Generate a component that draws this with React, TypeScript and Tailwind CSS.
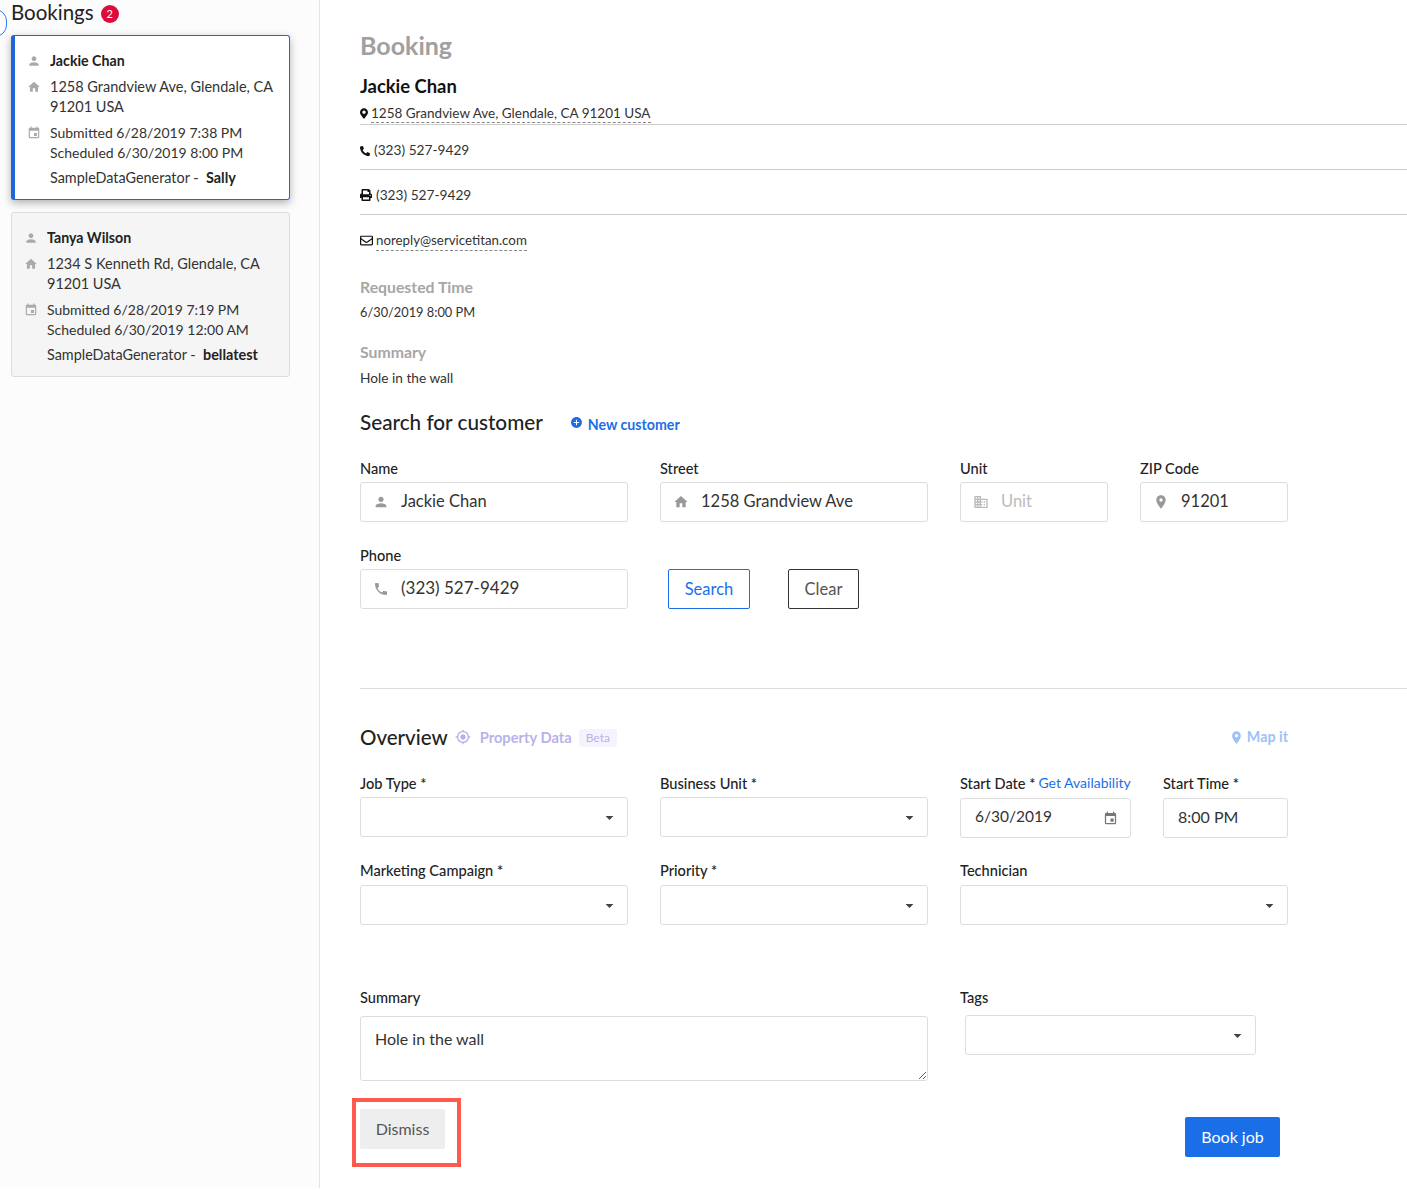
import React from "react";
import {
  MdPerson,
  MdHome,
  MdEvent,
  MdPhone,
  MdDomain,
  MdPlace,
  MdAddCircle,
  MdGpsFixed,
  MdArrowDropDown,
} from "react-icons/md";
import { FaMapMarkerAlt, FaPhoneAlt, FaPrint, FaRegEnvelope } from "react-icons/fa";

type BookingCardProps = {
  name: string;
  address: string;
  submitted: string;
  scheduled: string;
  agent: string;
  active?: boolean;
};

function BookingCard({ name, address, submitted, scheduled, agent, active }: BookingCardProps) {
  return (
    <div
      className={
        active
          ? "h-[165px] rounded-[3px] border border-[#1f66d8] border-l-[4px] bg-white pl-[12px] pr-2 pt-[15px] shadow-[0_3px_8px_rgba(0,0,0,0.3)]"
          : "h-[165px] rounded-[3px] border border-[#dcdcdc] bg-[#f5f5f5] pl-[12px] pr-2 pt-[15px]"
      }
    >
      <div className="flex h-5 items-center">
        <MdPerson className="w-[14px] h-[14px] text-[#aaaaaa]" />
        <span className="ml-[9px] text-[14.2px] font-bold text-[#222222]">{name}</span>
      </div>
      <div className="mt-[6px] flex">
        <MdHome className="mt-[3px] w-[14px] h-[14px] shrink-0 text-[#aaaaaa]" />
        <span className="ml-[9px] text-[14.5px] leading-5 text-[#333333]">{address}</span>
      </div>
      <div className="mt-[6px] flex">
        <MdEvent className="mt-[3px] w-[14px] h-[14px] shrink-0 text-[#aaaaaa]" />
        <span className="ml-[9px] text-[14px] leading-5 text-[#333333]">
          Submitted {submitted}
          <br />
          Scheduled {scheduled}
        </span>
      </div>
      <div className="mt-[5px] ml-[23px] text-[14.4px] leading-5 text-[#333333]">
        SampleDataGenerator -&nbsp; <b className="font-bold text-[#222222]">{agent}</b>
      </div>
    </div>
  );
}

function Field({
  label,
  extra,
  className,
  children,
}: {
  label: string;
  extra?: React.ReactNode;
  className: string;
  children: React.ReactNode;
}) {
  return (
    <div className={className}>
      <div className="flex h-4 items-center whitespace-nowrap pt-[2px] text-[14.6px] font-medium text-[#222222]">
        {label}
        {extra}
      </div>
      <div className="mt-[6px]">{children}</div>
    </div>
  );
}

function IconInput({
  icon,
  value,
  placeholder,
  textClass = "text-[16.5px]",
}: {
  icon: React.ReactNode;
  value?: string;
  placeholder?: string;
  textClass?: string;
}) {
  return (
    <div className="flex h-10 items-center rounded-[3px] border border-[#dddddd] bg-white pl-[12px]">
      <span className="flex w-[28px] shrink-0 text-[#999999]">{icon}</span>
      <input
        readOnly
        defaultValue={value}
        placeholder={placeholder}
        className={`w-full min-w-0 bg-transparent pb-[2px] ${textClass} text-[#333333] outline-none placeholder:text-[#bbbbbb]`}
      />
    </div>
  );
}

function SelectBox() {
  return (
    <div className="flex h-10 items-center justify-end rounded-[3px] border border-[#dddddd] bg-white pr-[8px]">
      <MdArrowDropDown className="w-[19px] h-[19px] text-[#444444]" />
    </div>
  );
}

export default function App() {
  return (
    <div
      className="flex h-[1190px] w-[1407px] overflow-hidden bg-white text-[#222222]"
      style={{ fontFamily: '"Lato", "Open Sans", sans-serif' }}
    >
      <aside className="relative h-[1188px] w-[320px] shrink-0 border-r border-[#e4e4e4] bg-[#fcfcfc] pl-[11px] pr-[29px]">
        <div className="absolute -left-[17px] top-[9px] h-[28px] w-[24px] rounded-full border border-[#2f7bf0]" />
        <div className="flex h-6 items-center">
          <span className="text-[20.5px] text-[#222222]">Bookings</span>
          <span className="ml-[7px] mt-[4px] flex h-[18px] w-[18px] items-center justify-center rounded-full bg-[#dc0d3c] text-[11px] text-white">
            2
          </span>
        </div>
        <div className="mt-[11px] flex flex-col gap-3">
          <BookingCard
            active
            name="Jackie Chan"
            address="1258 Grandview Ave, Glendale, CA 91201 USA"
            submitted="6/28/2019 7:38 PM"
            scheduled="6/30/2019 8:00 PM"
            agent="Sally"
          />
          <BookingCard
            name="Tanya Wilson"
            address="1234 S Kenneth Rd, Glendale, CA 91201 USA"
            submitted="6/28/2019 7:19 PM"
            scheduled="6/30/2019 12:00 AM"
            agent="bellatest"
          />
        </div>
      </aside>

      <main className="relative min-w-0 flex-1 pl-10">
        <h1 className="mt-[30px] h-[30px] text-[25px] font-bold leading-[30px] text-[#a0a0a0]">Booking</h1>
        <h2 className="mt-[15px] h-[22px] text-[18.4px] font-bold leading-[22px] text-[#111111]">Jackie Chan</h2>

        <div className="mt-[5px] flex h-[23px] items-start border-b border-[#cccccc] pt-[2px] text-[13.5px] text-[#333333]">
          <FaMapMarkerAlt className="mr-[3px] mt-[4px] w-[8px] h-[11px] text-[#111111]" />
          <span className="border-b border-dashed border-[#888888] leading-[18px]">1258 Grandview Ave, Glendale, CA 91201 USA</span>
        </div>
        <div className="flex h-[45px] items-center border-b border-[#cccccc] pt-[7px] text-[13.7px] text-[#333333]">
          <FaPhoneAlt className="mr-[4px] w-[10px] h-[10px] text-[#111111]" />
          (323) 527-9429
        </div>
        <div className="flex h-[45px] items-center border-b border-[#cccccc] pt-[6px] text-[13.7px] text-[#333333]">
          <FaPrint className="mr-[4px] w-[12px] h-[12px] text-[#111111]" />
          (323) 527-9429
        </div>
        <div className="mt-[15px] flex h-[20px] items-center text-[13.3px] text-[#333333]">
          <FaRegEnvelope className="mr-[3px] w-[13px] h-[13px] text-[#111111]" />
          <span className="border-b border-dashed border-[#888888] leading-[20px]">noreply@servicetitan.com</span>
        </div>

        <div className="mt-[27px] text-[15.8px] font-bold leading-5 text-[#a6a6a6]">Requested Time</div>
        <div className="mt-[5px] text-[12.8px] leading-5 text-[#333333]">6/30/2019 8:00 PM</div>
        <div className="mt-[20px] text-[15.8px] font-bold leading-5 text-[#a6a6a6]">Summary</div>
        <div className="mt-[6px] text-[13.7px] leading-5 text-[#333333]">Hole in the wall</div>

        <div className="mt-[20px] flex h-7 items-center">
          <h3 className="text-[20.7px] font-medium leading-7 text-[#222222]">Search for customer</h3>
          <MdAddCircle className="ml-[27px] mr-[5px] mt-px w-[13px] h-[13px] text-[#1a6fe8]" />
          <span className="mt-[5px] text-[14.2px] font-bold text-[#1a6fe8]">New customer</span>
        </div>

        <div className="mt-[24px] flex">
          <Field label="Name" className="w-[268px]">
            <IconInput icon={<MdPerson className="w-4 h-4" />} value="Jackie Chan" />
          </Field>
          <Field label="Street" className="ml-8 w-[268px]">
            <IconInput icon={<MdHome className="w-4 h-4" />} value="1258 Grandview Ave" />
          </Field>
          <Field label="Unit" className="ml-8 w-[148px]">
            <IconInput icon={<MdDomain className="w-4 h-4 text-[#bbbbbb]" />} placeholder="Unit" />
          </Field>
          <Field label="ZIP Code" className="ml-8 w-[148px]">
            <IconInput icon={<MdPlace className="w-4 h-4" />} value="91201" />
          </Field>
        </div>

        <div className="mt-[25px] flex items-end">
          <Field label="Phone" className="w-[268px]">
            <IconInput
              icon={<MdPhone className="w-4 h-4" />}
              value="(323) 527-9429"
              textClass="text-[17px]"
            />
          </Field>
          <button className="ml-10 h-10 w-[82px] rounded-[2px] border border-[#1a6fe8] bg-white text-[16.5px] text-[#1a6fe8]">Search</button>
          <button className="ml-[38px] h-10 w-[71px] rounded-[2px] border border-[#333333] bg-white text-[16.5px] text-[#555555]">Clear</button>
        </div>

        <div className="mt-[79px] border-t border-[#dddddd]" />

        <div className="relative mt-[34px] flex h-7 w-[928px] items-center">
          <h3 className="text-[20.5px] font-medium leading-7 text-[#222222]">Overview</h3>
          <MdGpsFixed className="ml-[7px] w-4 h-4 text-[#b9b2e8]" />
          <span className="ml-[9px] text-[14.7px] font-bold text-[#b9b2e8]">Property Data</span>
          <span className="ml-[7px] mt-[1px] rounded-[3px] bg-[#f5f3fd] px-[7px] text-[12px] leading-[18px] text-[#b9b2e8]">Beta</span>
          <span className="ml-auto flex items-center text-[14.3px] font-bold text-[#9cc2f7]">
            <MdPlace className="mr-[3px] w-[15px] h-[15px]" />
            Map it
          </span>
        </div>

        <div className="mt-[24px] flex">
          <Field label="Job Type *" className="w-[268px]">
            <SelectBox />
          </Field>
          <Field label="Business Unit *" className="ml-8 w-[268px]">
            <SelectBox />
          </Field>
          <Field
            label="Start Date *"
            className="ml-8 w-[171px]"
            extra={<span className="ml-[3px] -mt-[3px] text-[14px] font-normal text-[#1a6fe8]">Get Availability</span>}
          >
            <div className="pt-px">
              <div className="flex h-10 items-center justify-between rounded-[3px] border border-[#dddddd] bg-white pl-[14px] pr-[12px] text-[15.5px] text-[#333333]">
                <span className="pb-[2px]">6/30/2019</span>
                <MdEvent className="w-[15px] h-[15px] text-[#777777]" />
              </div>
            </div>
          </Field>
          <Field label="Start Time *" className="ml-8 w-[125px]">
            <div className="pt-px">
              <div className="flex h-10 items-center rounded-[3px] border border-[#dddddd] bg-white pb-[2px] pl-[14px] text-[16px] text-[#333333]">
                8:00 PM
              </div>
            </div>
          </Field>
        </div>

        <div className="mt-[24px] flex">
          <Field label="Marketing Campaign *" className="w-[268px]">
            <div className="pt-px">
              <SelectBox />
            </div>
          </Field>
          <Field label="Priority *" className="ml-8 w-[268px]">
            <div className="pt-px">
              <SelectBox />
            </div>
          </Field>
          <Field label="Technician" className="ml-8 w-[328px]">
            <div className="pt-px">
              <SelectBox />
            </div>
          </Field>
        </div>

        <div className="mt-[64px] flex">
          <div className="w-[568px]">
            <div className="flex h-4 items-center pt-[2px] text-[14.6px] font-medium text-[#222222]">Summary</div>
            <textarea
              readOnly
              defaultValue="Hole in the wall"
              className="mt-[11px] block h-[65px] w-full rounded-[3px] border border-[#dddddd] bg-white px-[14px] py-[12px] text-[16px] leading-5 text-[#333333] outline-none"
            />
          </div>
          <div className="ml-8 w-[296px]">
            <div className="flex h-4 items-center pt-[2px] text-[14.6px] font-medium text-[#222222]">Tags</div>
            <div className="ml-[5px] mt-[10px] w-[291px]">
              <SelectBox />
            </div>
          </div>
        </div>

        <div className="mt-[28px] flex w-[920px] items-start justify-between">
          <button className="h-10 w-[85px] rounded-[2px] bg-[#eeeeee] text-[16px] text-[#555555]">Dismiss</button>
          <button className="mt-2 h-10 w-[95px] rounded-[2px] bg-[#1a6fe8] text-[16px] text-white">Book job</button>
        </div>

        {/* annotation round the Dismiss button */}
        <div className="absolute left-[32px] top-[1098px] h-[69px] w-[109px] border-[4px] border-[#ff5a4d]" />
      </main>
    </div>
  );
}
